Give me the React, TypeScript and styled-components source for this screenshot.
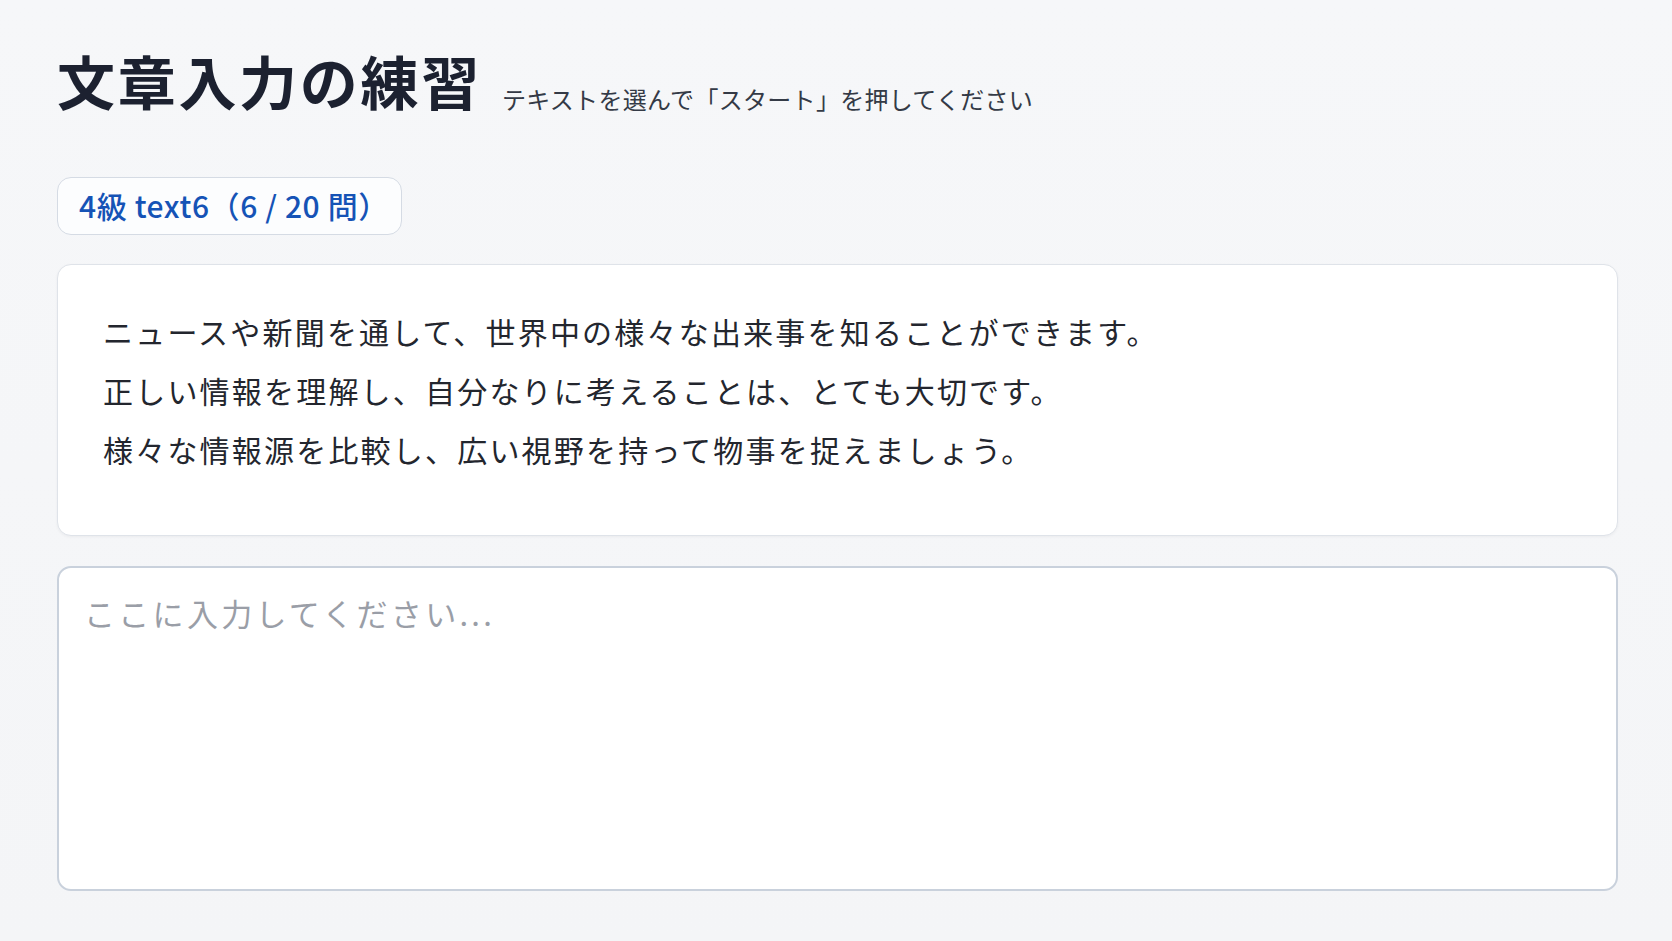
import styled, { createGlobalStyle } from "styled-components";
import { useState } from "react";

const GlobalStyle = createGlobalStyle`
  html, body {
    margin: 0;
    padding: 0;
    background: #f5f6f8;
  }
  body {
    font-family: "Noto Sans CJK JP", "Noto Sans", "Liberation Sans", sans-serif;
    color: #1f2430;
  }
  * {
    box-sizing: border-box;
  }
`;

const Page = styled.div`
  min-height: 941px;
  padding: 46px 54px 40px 57px;
  background: linear-gradient(180deg, #f6f7f9 0%, #f4f5f7 100%);
  display: flex;
  flex-direction: column;
`;

const Header = styled.header`
  display: flex;
  align-items: flex-end;
  gap: 20px;
`;

const Title = styled.h1`
  margin: 0;
  font-size: 58px;
  font-weight: 700;
  letter-spacing: 2.7px;
  line-height: 1.2;
  color: #1c2130;
`;

const Subtitle = styled.span`
  font-size: 24px;
  font-weight: 400;
  letter-spacing: 0.3px;
  color: #343a46;
`;

const Badge = styled.div`
  align-self: flex-start;
  margin-top: 61px;
  padding: 8.5px 12px 8.5px 21px;
  border: 1.5px solid #d5dbe4;
  border-radius: 14px;
  background: #fcfdfe;
  color: #1553b6;
  font-size: 30px;
  font-weight: 500;
  letter-spacing: 0.6px;
  line-height: 1.3;
`;

const Card = styled.section`
  margin-top: 29px;
  padding: 37px 46px 56px 45px;
  background: #ffffff;
  border: 1.5px solid #dfe3e9;
  border-radius: 14px;
  box-shadow: 0 1px 3px rgba(30, 40, 60, 0.05);
`;

const Line = styled.p`
  margin: 0;
  font-size: 30px;
  letter-spacing: 2.2px;
  line-height: 59px;
  color: #23262e;
`;

const InputArea = styled.textarea`
  margin-top: 30px;
  height: 325px;
  width: 100%;
  resize: none;
  padding: 21px 25px;
  background: #ffffff;
  border: 2px solid #c9d1dc;
  border-radius: 14px;
  font-family: "Noto Sans CJK JP", "Noto Sans", "Liberation Sans", sans-serif;
  font-size: 30px;
  letter-spacing: 2.2px;
  line-height: 48px;
  color: #23262e;
  outline: none;

  &::placeholder {
    color: #9a9ea7;
    font-size: 31px;
    letter-spacing: 3.3px;
  }
`;

const lines = [
  "ニュースや新聞を通して、世界中の様々な出来事を知ることができます。",
  "正しい情報を理解し、自分なりに考えることは、とても大切です。",
  "様々な情報源を比較し、広い視野を持って物事を捉えましょう。",
];

function App() {
  const [value, setValue] = useState("");

  return (
    <>
      <GlobalStyle />
      <Page>
        <Header>
          <Title>文章入力の練習</Title>
          <Subtitle>テキストを選んで「スタート」を押してください</Subtitle>
        </Header>
        <Badge>4級 text6（6 / 20 問）</Badge>
        <Card>
          {lines.map((line, i) => (
            <Line key={i}>{line}</Line>
          ))}
        </Card>
        <InputArea
          value={value}
          onChange={(e) => setValue(e.target.value)}
          placeholder="ここに入力してください..."
        />
      </Page>
    </>
  );
}

export default App;
